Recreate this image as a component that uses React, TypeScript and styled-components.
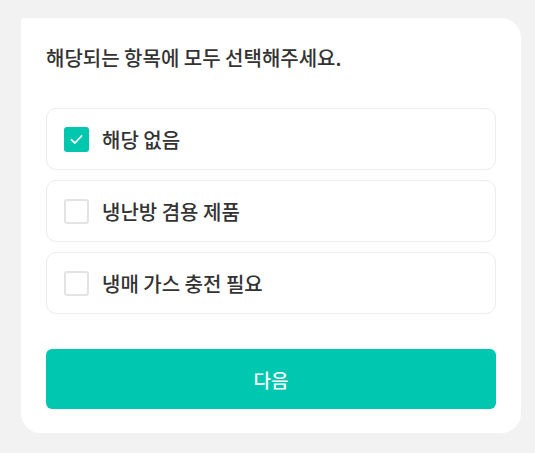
import React, { useState } from "react";
import styled, { createGlobalStyle } from "styled-components";

const Global = createGlobalStyle`
  html, body { margin: 0; padding: 0; background: #f2f2f2; }
  body { font-family: "Noto Sans CJK KR", "Noto Sans", sans-serif; }
  * { box-sizing: border-box; }
`;

const Page = styled.div`
  padding: 18px 14px 20px 21px;
`;

const Card = styled.div`
  width: 500px;
  background: #ffffff;
  border-radius: 4px 20px 20px 20px;
  padding: 26px 25px 24px 25px;
  display: flex;
  flex-direction: column;
`;

const Title = styled.h2`
  margin: 0;
  font-size: 20px;
  font-weight: 500;
  color: #333333;
  line-height: 28px;
`;

const List = styled.div`
  margin-top: 36px;
  display: flex;
  flex-direction: column;
  gap: 10px;
`;

const Option = styled.label`
  height: 62px;
  border: 1px solid #ececec;
  border-radius: 10px;
  display: flex;
  align-items: center;
  padding-left: 17px;
  gap: 13px;
  cursor: pointer;
`;

const Box = styled.span<{ $checked: boolean }>`
  width: 25px;
  height: 25px;
  border-radius: 3px;
  display: flex;
  align-items: center;
  justify-content: center;
  background: ${(p) => (p.$checked ? "#00c7ae" : "#ffffff")};
  border: ${(p) => (p.$checked ? "none" : "2px solid #e3e3e3")};
`;

const Label = styled.span`
  font-size: 20px;
  font-weight: 500;
  color: #333333;
`;

const Button = styled.button`
  margin-top: 35px;
  height: 60px;
  border: none;
  border-radius: 6px;
  background: #00c8b0;
  color: #ffffff;
  font-family: inherit;
  font-size: 19px;
  font-weight: 500;
  cursor: pointer;
`;

const items = ["해당 없음", "냉난방 겸용 제품", "냉매 가스 충전 필요"];

export default function App() {
  const [checked, setChecked] = useState<boolean[]>([true, false, false]);
  return (
    <>
      <Global />
      <Page>
        <Card>
          <Title>해당되는 항목에 모두 선택해주세요.</Title>
          <List>
            {items.map((t, i) => (
              <Option
                key={t}
                onClick={() =>
                  setChecked((c) => c.map((v, j) => (j === i ? !v : v)))
                }
              >
                <Box $checked={checked[i]}>
                  {checked[i] && (
                    <svg width="15" height="15" viewBox="0 0 15 15" fill="none">
                      <path
                        d="M2.5 7.8 L6 11 L12.5 4"
                        stroke="#ffffff"
                        strokeWidth="1.8"
                        strokeLinecap="round"
                        strokeLinejoin="round"
                      />
                    </svg>
                  )}
                </Box>
                <Label>{t}</Label>
              </Option>
            ))}
          </List>
          <Button>다음</Button>
        </Card>
      </Page>
    </>
  );
}
